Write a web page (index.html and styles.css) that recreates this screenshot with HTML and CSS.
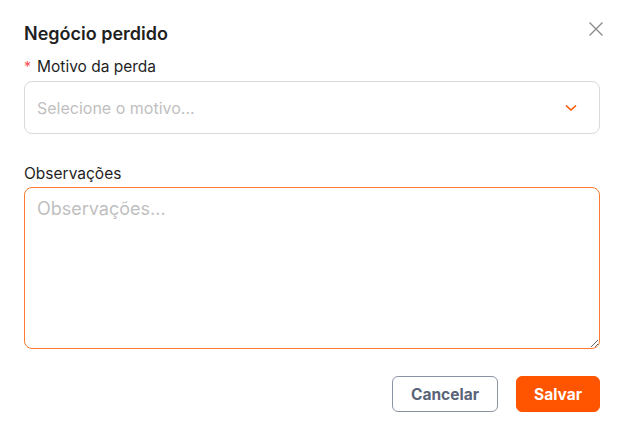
FILE: index.html
```html
<!DOCTYPE html>
<html lang="pt">
<head>
<meta charset="utf-8">
<link rel="stylesheet" href="styles.css">
</head>
<body>
<div class="modal">
  <div class="header">
    <h1 class="title">Negócio perdido</h1>
    <button class="close" aria-label="Fechar">
      <svg width="16" height="16" viewBox="0 0 16 16"><path d="M1.5 1.5 L14.5 14.5 M14.5 1.5 L1.5 14.5" stroke="#8c8c8c" stroke-width="1.4" fill="none"/></svg>
    </button>
  </div>
  <div class="field">
    <label class="label"><span class="req">*</span>Motivo da perda</label>
    <div class="select">
      <span class="placeholder">Selecione o motivo...</span>
      <svg class="chev" width="12" height="8" viewBox="0 0 12 8"><path d="M1 1.5 L6 6 L11 1.5" stroke="#ff5500" stroke-width="1.6" fill="none"/></svg>
    </div>
  </div>
  <div class="field obs">
    <label class="label">Observações</label>
    <textarea class="textarea" placeholder="Observações..."></textarea>
  </div>
  <div class="footer">
    <button class="btn cancel">Cancelar</button>
    <button class="btn save">Salvar</button>
  </div>
</div>
</body>
</html>
```
FILE: styles.css
```css
html, body {
  margin: 0;
  padding: 0;
  background: #ffffff;
}
body {
  font-family: Inter, "Noto Sans", sans-serif;
  color: #1f1f1f;
}
.modal {
  width: 626px;
  height: 434px;
  box-sizing: border-box;
  padding: 20px 26px 0 24px;
  background: #fff;
}
.header {
  display: flex;
  justify-content: space-between;
  align-items: flex-start;
  height: 28px;
}
.title {
  margin: 0;
  font-size: 18px;
  line-height: 28px;
  font-weight: 600;
  color: #1f1f1f;
}
.close {
  border: none;
  background: none;
  padding: 0;
  margin-top: 1px;
  margin-right: -4px;
  width: 16px;
  height: 16px;
  display: flex;
}
.field {
  display: flex;
  flex-direction: column;
  margin-top: 8px;
}
.label {
  font-size: 15.5px;
  line-height: 22px;
  color: #1f1f1f;
  margin-bottom: 3px;
}
.req {
  color: #ff4d4f;
  font-size: 14px;
  margin-right: 6px;
}
.select {
  height: 53px;
  box-sizing: border-box;
  border: 1px solid #d9d9d9;
  border-radius: 8px;
  display: flex;
  align-items: center;
  justify-content: space-between;
  padding: 0 22px 0 12px;
}
.placeholder {
  font-size: 16px;
  color: #bfbfbf;
}
.obs {
  margin-top: 29px;
}
.obs .label {
  margin-bottom: 2px;
}
.textarea {
  height: 162px;
  box-sizing: border-box;
  border: 1px solid #ff7a2e;
  border-radius: 8px;
  padding: 10px 12px;
  font-family: Inter, "Noto Sans", sans-serif;
  font-size: 18px;
  color: #1f1f1f;
  resize: vertical;
  outline: none;
}
.textarea::placeholder {
  color: #bfbfbf;
}
.footer {
  display: flex;
  justify-content: flex-end;
  gap: 18px;
  margin-top: 27px;
}
.btn {
  height: 36px;
  border-radius: 6px;
  font-family: Inter, "Noto Sans", sans-serif;
  font-size: 15.5px;
  font-weight: 700;
  padding: 0;
  cursor: pointer;
}
.cancel {
  width: 106px;
  background: #fff;
  border: 1px solid #8c93a3;
  color: #5a6478;
}
.save {
  width: 84px;
  background: #ff5500;
  border: 1px solid #ff5500;
  color: #fff;
}
```
